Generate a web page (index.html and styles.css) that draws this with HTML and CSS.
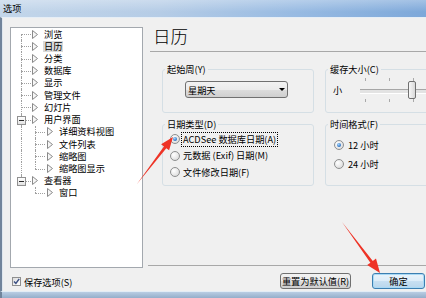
FILE: index.html
```html
<!DOCTYPE html>
<html lang="zh-CN">
<head>
    <meta charset="UTF-8" />
    <title>选项</title>
    <link rel="stylesheet" href="styles.css">
</head>
<body>
    <svg class="sprite" aria-hidden="true">
        <symbol id="leaf" viewBox="0 0 6 9">
            <path d="M0.5 0.5 L5.5 4.5 L0.5 8.5 Z" fill="#f6f6f6" stroke="#8a8a8a" stroke-width="1" stroke-linejoin="round" />
        </symbol>
    </svg>

    <div class="window">
        <div class="titlebar">选项</div>

        <div class="client">
            <!-- arbre des pages -->
            <div class="tree-box">
                <ul class="tree">
                    <li class="node first"><span class="twig"></span><svg class="leaf"><use href="#leaf" /></svg><span class="name">浏览</span></li>
                    <li class="node"><span class="twig"></span><svg class="leaf"><use href="#leaf" /></svg><span class="name current">日历</span></li>
                    <li class="node"><span class="twig"></span><svg class="leaf"><use href="#leaf" /></svg><span class="name">分类</span></li>
                    <li class="node"><span class="twig"></span><svg class="leaf"><use href="#leaf" /></svg><span class="name">数据库</span></li>
                    <li class="node"><span class="twig"></span><svg class="leaf"><use href="#leaf" /></svg><span class="name">显示</span></li>
                    <li class="node"><span class="twig"></span><svg class="leaf"><use href="#leaf" /></svg><span class="name">管理文件</span></li>
                    <li class="node"><span class="twig"></span><svg class="leaf"><use href="#leaf" /></svg><span class="name">幻灯片</span></li>
                    <li class="node"><span class="twig"><span class="toggle"></span></span><svg class="leaf"><use href="#leaf" /></svg><span class="name">用户界面</span></li>
                    <li class="node child"><span class="pass"></span><span class="twig"></span><svg class="leaf"><use href="#leaf" /></svg><span class="name">详细资料视图</span></li>
                    <li class="node child"><span class="pass"></span><span class="twig"></span><svg class="leaf"><use href="#leaf" /></svg><span class="name">文件列表</span></li>
                    <li class="node child"><span class="pass"></span><span class="twig"></span><svg class="leaf"><use href="#leaf" /></svg><span class="name">缩略图</span></li>
                    <li class="node child last"><span class="pass"></span><span class="twig"></span><svg class="leaf"><use href="#leaf" /></svg><span class="name">缩略图显示</span></li>
                    <li class="node last"><span class="twig"><span class="toggle"></span></span><svg class="leaf"><use href="#leaf" /></svg><span class="name">查看器</span></li>
                    <li class="node child last"><span class="pass end"></span><span class="twig"></span><svg class="leaf"><use href="#leaf" /></svg><span class="name">窗口</span></li>
                </ul>
            </div>

            <div class="main">
                <h1 class="page-title">日历</h1>
                <div class="rule"></div>

                <div class="groups">
                    <fieldset class="group">
                        <legend>起始周(Y)</legend>
                        <div class="combo"><span>星期天</span><span class="caret"></span></div>
                    </fieldset>

                    <fieldset class="group">
                        <legend>缓存大小(C)</legend>
                        <div class="slider-row">
                            <span>小</span>
                            <div class="slider">
                                <div class="ticks"><span></span><span></span><span></span><span></span></div>
                                <div class="ticks"><span></span><span></span><span></span><span></span></div>
                                <div class="thumb" style="left: 48px;"></div>
                            </div>
                        </div>
                    </fieldset>

                    <fieldset class="group">
                        <legend>日期类型(D)</legend>
                        <ul class="options date-options">
                            <li><span class="radio on"></span><span class="opt-text focus">ACDSee 数据库日期(A)</span></li>
                            <li><span class="radio"></span><span class="opt-text">元数据 (Exif) 日期(M)</span></li>
                            <li><span class="radio"></span><span class="opt-text">文件修改日期(F)</span></li>
                        </ul>
                    </fieldset>

                    <fieldset class="group">
                        <legend>时间格式(F)</legend>
                        <ul class="options time-options">
                            <li><span class="radio on"></span><span class="opt-text">12 小时</span></li>
                            <li><span class="radio"></span><span class="opt-text">24 小时</span></li>
                        </ul>
                    </fieldset>
                </div>

                <div class="rule rule-bottom"></div>
            </div>

            <div class="footer-left">
                <span class="checkbox">
                    <svg width="7" height="7" viewBox="0 0 7 7"><path d="M1 3.4 L2.9 5.4 L6.2 0.9" fill="none" stroke="#3b4f82" stroke-width="1.5" /></svg>
                </span>
                <span class="check-text">保存选项(S)</span>
            </div>

            <div class="footer-right">
                <button class="btn btn-reset">重置为默认值(R)</button>
                <button class="btn btn-ok">确定</button>
            </div>
        </div>

        <div class="frame-bottom"></div>

        <!-- flèches rouges -->
        <svg class="marks" width="426" height="298" viewBox="0 0 426 298">
            <polygon points="137,184 163.9,146.4 161.1,144.3 173,137 169.1,150.3 166.3,148.2" fill="#ee3326" />
            <polygon points="342,222 372.8,260.9 376,258.5 380,273 367.2,265.1 370.4,262.7" fill="#ee3326" />
        </svg>
    </div>
</body>
</html>
```

FILE: styles.css
```css
* {
    box-sizing: border-box;
    margin: 0;
    padding: 0;
}

body {
    width: 426px;
    height: 298px;
    overflow: hidden;
    font-family: "Noto Sans CJK SC", "Noto Sans", sans-serif;
    font-size: 9.2px;
    color: #000;
    background: #f0f0f0;
}

.sprite {
    position: absolute;
    width: 0;
    height: 0;
}

.window {
    position: relative;
    width: 460px;
    height: 298px;
    display: flex;
    flex-direction: column;
}

.titlebar {
    height: 17px;
    flex-shrink: 0;
    padding-left: 3px;
    line-height: 16px;
    background:
        linear-gradient(to bottom, rgba(255, 255, 255, 0.3), rgba(255, 255, 255, 0) 70%),
        linear-gradient(to right, #c3d6ea 0%, #b5cce6 35%, #97bae2 65%, #76a3d7 100%);
}

.client {
    flex: 1;
    display: grid;
    grid-template-columns: 133px 1fr;
    grid-template-rows: 1fr 23px;
    column-gap: 5px;
    padding-left: 8px;
    border-top: 1px solid #e6eef6;
    border-left: 2px solid #71849b;
    box-shadow: inset 1px 0 #dfe7ef;
    background: #f0f0f0;
}

.frame-bottom {
    height: 7px;
    flex-shrink: 0;
    border-top: 1px solid #e3ecf5;
    border-left: 2px solid #71849b;
    background: linear-gradient(#b9cde3, #94aeca);
}

/* arbre */
.tree-box {
    margin-top: 9px;
    background: #fff;
    border: 1px solid #a3a8ae;
}

.tree {
    list-style: none;
}

.node {
    display: flex;
    align-items: center;
    height: 12.23px;
    white-space: nowrap;
}

.twig {
    position: relative;
    align-self: stretch;
    flex-shrink: 0;
    width: 10px;
    margin-left: 10px;
}

.twig::before {
    content: "";
    position: absolute;
    left: 0;
    top: 0;
    bottom: 0;
    border-left: 1px dotted #a0a0a0;
}

.twig::after {
    content: "";
    position: absolute;
    left: 0;
    right: 0;
    top: 50%;
    border-top: 1px dotted #a0a0a0;
}

.first .twig::before {
    top: 50%;
}

.last .twig::before {
    bottom: 50%;
}

.pass {
    align-self: stretch;
    flex-shrink: 0;
    width: 14px;
    margin-left: 10px;
    border-left: 1px dotted #a0a0a0;
}

.pass.end {
    border-left-color: transparent;
}

.child .twig {
    margin-left: 0;
}

.toggle {
    position: absolute;
    left: -4px;
    top: 50%;
    margin-top: -4px;
    width: 9px;
    height: 9px;
    border: 1px solid #919191;
    background: linear-gradient(#fff, #e2e2e2);
    z-index: 1;
}

.toggle::after {
    content: "";
    position: absolute;
    left: 1px;
    right: 1px;
    top: 3px;
    height: 1px;
    background: #2b2b2b;
}

.leaf {
    flex-shrink: 0;
    width: 6px;
    height: 9px;
    margin-left: 1px;
}

.child .leaf {
    margin-left: 2px;
}

.name {
    margin-left: 5px;
    padding: 0 1px;
    line-height: 11px;
}

.name.current {
    background: #dadada;
}

/* page */
.main {
    display: flex;
    flex-direction: column;
    min-width: 0;
    padding-top: 6px;
}

.page-title {
    margin-left: 5px;
    font-size: 17.5px;
    font-weight: 300;
    line-height: 24px;
}

.rule {
    margin: 3px 0 0 2px;
    border-top: 1px solid #a8a8a8;
}

.rule-bottom {
    margin: auto 0 2px 0;
}

.groups {
    display: grid;
    grid-template-columns: 152px 130px;
    grid-template-rows: 51px 69px;
    gap: 4px 11px;
    margin: 10px 0 0 14px;
}

.group {
    min-width: 0;
    border: 1px solid #d5dfe5;
    border-radius: 3px;
}

.group legend {
    margin-left: 2px;
    padding: 0 2px;
    line-height: 14px;
}

.combo {
    display: flex;
    align-items: center;
    justify-content: space-between;
    width: 103px;
    height: 17px;
    margin: 5px 0 0 22px;
    padding: 0 2px;
    border: 1px solid #707070;
    border-radius: 3px;
    background: linear-gradient(#f2f2f2 0%, #ebebeb 50%, #dddddd 50%, #cfcfcf 100%);
}

.caret {
    width: 0;
    height: 0;
    border-left: 3px solid transparent;
    border-right: 3px solid transparent;
    border-top: 3px solid #000;
}

.slider-row {
    display: flex;
    align-items: center;
    height: 24px;
    margin: 2px 0 0 7px;
}

.slider {
    position: relative;
    width: 100px;
    height: 24px;
    margin-left: 18px;
    display: flex;
    flex-direction: column;
    justify-content: space-between;
}

.slider::before {
    content: "";
    position: absolute;
    left: 0;
    right: 0;
    top: 11px;
    height: 3px;
    border-top: 1px solid #a6a6a6;
    border-bottom: 1px solid #fff;
    background: #e3e3e3;
}

.ticks {
    display: flex;
    gap: 23px;
    padding-left: 5px;
}

.ticks span {
    width: 1px;
    height: 3px;
    background: #a9a9a9;
}

.thumb {
    position: absolute;
    top: 3px;
    width: 8px;
    height: 18px;
    border: 1px solid #707070;
    border-radius: 2px;
    background: linear-gradient(to right, #f7f7f7, #d9d9d9);
}

.options {
    list-style: none;
}

.options li {
    display: flex;
    align-items: center;
    white-space: nowrap;
}

.date-options {
    padding-left: 7px;
}

.date-options li {
    height: 16.5px;
}

.time-options {
    padding: 4.5px 0 0 8px;
}

.time-options li {
    height: 19px;
}

.radio {
    position: relative;
    flex-shrink: 0;
    width: 10px;
    height: 10px;
    border: 1px solid #8e8f8f;
    border-radius: 50%;
    background: radial-gradient(circle at 35% 35%, #fff 0%, #e6e6e6 60%, #cfcfcf 100%);
}

.radio.on::after {
    content: "";
    position: absolute;
    inset: 2px;
    border-radius: 50%;
    background: radial-gradient(circle at 40% 35%, #a4d6ff, #2a6fc1 70%, #16487f);
}

.opt-text {
    margin-left: 1px;
    padding: 0 1px;
    border: 1px dotted transparent;
    line-height: 13px;
}

.opt-text.focus {
    border-color: #000;
}

.time-options .opt-text {
    margin-left: 2px;
}

/* bas */
.footer-left {
    display: flex;
    align-items: center;
    padding: 4px 0 0 2px;
    align-self: start;
    height: 23px;
}

.checkbox {
    display: flex;
    align-items: center;
    justify-content: center;
    width: 9px;
    height: 9px;
    border: 1px solid #8f8f8f;
    background: linear-gradient(135deg, #dcdcdc, #fff);
}

.check-text {
    margin-left: 3px;
}

.footer-right {
    display: flex;
    align-items: center;
    gap: 21px;
    padding: 2px 0 0 132px;
}

.btn {
    height: 16px;
    padding: 0;
    border: 1px solid #707070;
    border-radius: 3px;
    background: linear-gradient(#f2f2f2 0%, #ebebeb 50%, #dddddd 50%, #cfcfcf 100%);
    font: inherit;
    color: #000;
    line-height: 14px;
    text-align: center;
    white-space: nowrap;
}

.btn-reset {
    width: 71px;
}

.btn-ok {
    width: 53px;
    border-color: #3c7fb1;
    box-shadow: inset 0 0 0 1px #a9d9f5;
    background: linear-gradient(#eaf4fb 0%, #dcecf8 50%, #c8e0f2 50%, #b9d6ec 100%);
}

.marks {
    position: absolute;
    top: 0;
    left: 0;
    pointer-events: none;
}
```
